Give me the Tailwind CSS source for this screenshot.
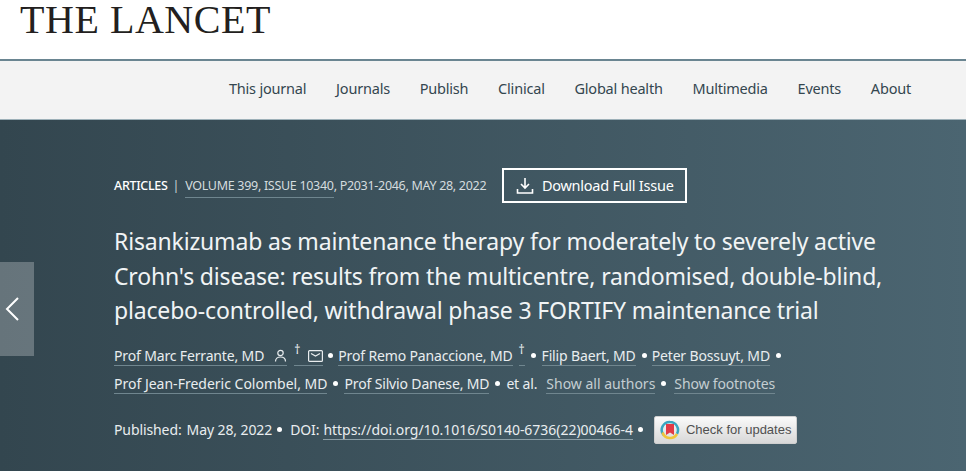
<!DOCTYPE html>
<html><head><meta charset="utf-8"><script src="https://cdn.jsdelivr.net/npm/@tailwindcss/browser@4"></script></head>
<body class="m-0 w-[966px] h-[471px] overflow-hidden bg-white font-['Noto_Sans',sans-serif]">
<header class="h-[59px] pl-[20px]">
  <div class="font-['Liberation_Serif',serif] text-[40px] leading-[40px] tracking-[0.55px] text-[#231f20]">THE LANCET</div>
</header>
<div class="h-[2px] bg-[#6a8591]"></div>
<nav class="h-[59px] pb-[3px] bg-[#f3f3f3] border-b border-[#9db0b8] flex items-center justify-end gap-[29.750px] pr-[55px] text-[14.500px] tracking-[-0.2px] text-[#34464f]">
  <a>This journal</a><a>Journals</a><a>Publish</a><a>Clinical</a><a>Global health</a><a>Multimedia</a><a>Events</a><a>About</a>
</nav>
<main class="relative h-[351px] bg-gradient-to-r from-[#33464f] to-[#4b6571] pl-[114px] pt-[48px] text-white">
  <a class="absolute left-0 top-[142px] w-[34px] h-[94px] bg-white/25 flex items-center justify-center">
    <svg class="-ml-[10px]" width="18" height="26" viewBox="0 0 18 26" fill="none" stroke="#fff" stroke-width="2"><path d="M15 2 4 13l11 11"/></svg>
  </a>
  <div class="flex items-center h-[36px] text-[12.500px] tracking-[-0.3px] whitespace-nowrap">
    <span class="font-medium">ARTICLES</span><span class="mx-[5px] text-[#c9d2d6]">|</span>
    <span class="text-[#d5dcdf] ml-[1px]"><span class="border-b border-[#6f868f] pb-[3px]">VOLUME 399, ISSUE 10340</span>, P2031-2046, MAY 28, 2022</span>
    <a class="ml-[16px] self-start w-[185px] h-[35px] border-2 border-white flex items-center justify-center gap-[8px] text-[14.500px] tracking-[-0.25px]">
      <svg width="18" height="18" viewBox="0 0 18 18" fill="none" stroke="#fff" stroke-width="1.6"><path d="M9 1v10M5 7l4 4 4-4M1.500 12v4h15v-4"/></svg>
      <span>Download Full Issue</span>
    </a>
  </div>
  <h1 class="mt-[20px] text-[23px] leading-[34.500px] tracking-[-0.17px] font-normal text-[#f1f4f5] whitespace-nowrap">Risankizumab as maintenance therapy for moderately to severely active<br>Crohn's disease: results from the multicentre, randomised, double-blind,<br>placebo-controlled, withdrawal phase 3 FORTIFY maintenance trial</h1>
  <div class="mt-[14px] text-[14px] tracking-[-0.15px] text-[#e9edef] whitespace-nowrap">
    <div class="flex items-center h-[28px]">
      <span class="border-b border-[#70868f] leading-[19px] flex items-center">Prof Marc Ferrante, MD
        <svg class="ml-[10px]" width="13" height="13" viewBox="0 0 13 13" fill="none" stroke="#e9edef" stroke-width="1.2"><circle cx="6.500" cy="4" r="2.700"/><path d="M1.500 12.500c0-3 2-4.500 5-4.500s5 1.500 5 4.500"/></svg></span>
      <span class="ml-[7px] w-[29px] border-b border-[#70868f] h-[20px] flex items-start">
        <span class="text-[12px] leading-[12px] -mt-[2px]">†</span>
        <svg class="ml-[8px] mt-[4px]" width="15" height="12" viewBox="0 0 15 12" fill="none" stroke="#e9edef" stroke-width="1.2"><rect x=".6" y=".6" width="13.800" height="10.800" rx="1"/><path d="M3 3.500 7.500 6 12 3.500"/></svg>
      </span>
      <span class="w-[5px] h-[5px] rounded-full bg-white mx-[5px]"></span>
      <span class="border-b border-[#70868f] leading-[19px]">Prof Remo Panaccione, MD</span>
      <span class="ml-[6px] border-b border-[#70868f] h-[20px] w-[6px] text-[12px] leading-[12px]"><span class="block -mt-[2px]">†</span></span>
      <span class="w-[5px] h-[5px] rounded-full bg-white mx-[6px]"></span>
      <span class="border-b border-[#70868f] leading-[19px]">Filip Baert, MD</span>
      <span class="w-[5px] h-[5px] rounded-full bg-white ml-[6px] mr-[5px]"></span>
      <span class="border-b border-[#70868f] leading-[19px]">Peter Bossuyt, MD</span>
      <span class="w-[5px] h-[5px] rounded-full bg-white ml-[6px]"></span>
    </div>
    <div class="flex items-center h-[28px]">
      <span class="border-b border-[#70868f] leading-[19px] tracking-[0px]">Prof Jean-Frederic Colombel, MD</span>
      <span class="w-[5px] h-[5px] rounded-full bg-white mx-[6px]"></span>
      <span class="border-b border-[#70868f] leading-[19px]">Prof Silvio Danese, MD</span>
      <span class="w-[5px] h-[5px] rounded-full bg-white mx-[6px]"></span>
      <span>et al.</span>
      <span class="ml-[9px] border-b border-[#70868f] leading-[19px] tracking-[0px] text-[#c4ced2]">Show all authors</span>
      <span class="w-[5px] h-[5px] rounded-full bg-white ml-[6px] mr-[8px]"></span>
      <span class="border-b border-[#70868f] leading-[19px] text-[#c4ced2]">Show footnotes</span>
    </div>
  </div>
  <div class="mt-[18px] flex items-center text-[14px] tracking-[-0.1px] text-[#e9edef] whitespace-nowrap">
    <span>Published:</span><span class="ml-[5px]">May 28, 2022</span><span class="w-[5px] h-[5px] rounded-full bg-white ml-[5px]"></span>
    <span class="ml-[8px]">DOI:</span>
    <span class="ml-[4px] border-b border-[#8b9ea6] leading-[19px] tracking-[-0.03px]">https://doi.org/10.1016/S0140-6736(22)00466-4</span>
    <span class="w-[5px] h-[5px] rounded-full bg-white ml-[5px]"></span>
    <span class="ml-[11px] w-[143px] h-[28px] rounded-[2px] bg-gradient-to-b from-[#fafafa] to-[#d8d8d8] border border-[#cfcfcf] flex items-center gap-[6px] pl-[5px] font-['Liberation_Sans',sans-serif] text-[13px] tracking-normal text-[#505050]">
      <svg width="20" height="20" viewBox="0 0 20 20" fill="none"><path d="M3.500 15A8 8 0 0 1 10 2a8 8 0 0 1 7 11.800" stroke="#3aa6c0" stroke-width="2.500"/><path d="M2.500 12.500A8 8 0 0 0 17 14" stroke="#f0c53a" stroke-width="2.500"/><path d="M6 4h8v11l-4-2.500L6 15z" fill="#e23a45"/></svg>
      Check for updates
    </span>
  </div>
</main>
</body></html>
